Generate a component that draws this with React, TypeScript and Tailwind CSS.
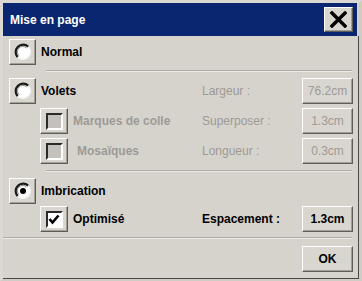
import React from 'react';

const raised =
	'border border-t-white border-l-white border-r-[#5e5c58] border-b-[#5e5c58] shadow-[inset_-1px_-1px_0_#a19e98]';

const RadioBtn = ({ checked }: { checked?: boolean }) => (
	<div className={`w-[27px] h-[26px] flex items-center justify-center bg-[#d9d6d0] ${raised}`}>
		<svg width="18" height="18" viewBox="0 0 18 18">
			<circle cx="9" cy="9" r="7.5" fill="#ffffff" />
			<path d="M3.7 14.3 A7.5 7.5 0 0 1 14.3 3.7" fill="none" stroke="#1a1a1a" strokeWidth="2.2" />
			<path d="M14.3 3.7 A7.5 7.5 0 0 1 3.7 14.3" fill="none" stroke="#f4f4f4" strokeWidth="1.5" />
			<path d="M5 12.5 A5.3 5.3 0 0 1 12.5 5" fill="none" stroke="#8a8884" strokeWidth="1" />
			{checked && <circle cx="9" cy="9" r="3" fill="#000000" />}
		</svg>
	</div>
);

const CheckBtn = ({ checked, disabled }: { checked?: boolean; disabled?: boolean }) => (
	<div className={`w-[28px] h-[26px] flex items-center justify-center bg-[#d9d6d0] ${raised}`}>
		<div
			className={`w-[17px] h-[17px] border-2 border-t-[#2a2a2a] border-l-[#2a2a2a] border-r-white border-b-white flex items-center justify-center ${
				disabled ? 'bg-[#c4c1bc]' : 'bg-white'
			}`}
		>
			{checked && (
				<svg width="12" height="11" viewBox="0 0 12 11">
					<path d="M1.5 5 L4.5 8.5 L10.5 1.5" fill="none" stroke="#000" strokeWidth="2.6" />
				</svg>
			)}
		</div>
	</div>
);

const ValueBox = ({ value, disabled }: { value: string; disabled?: boolean }) => (
	<div
		className={`w-[51px] h-[26px] flex items-center justify-center text-[12px] bg-[#d9d6d0] ${raised} ${
			disabled ? 'text-[#9d9a95]' : 'text-black font-bold'
		}`}
	>
		{value}
	</div>
);

const Sep = ({ full }: { full?: boolean }) => (
	<div className={`h-[2px] border-t border-t-[#aeaba6] border-b border-b-[#ecebe8] ${full ? 'ml-0' : 'ml-[37px]'} mr-[1px]`} />
);

const Row = ({
	left,
	label,
	box,
	mt,
	labelGray,
}: {
	left: React.ReactNode;
	label?: string;
	box?: React.ReactNode;
	mt: string;
	labelGray?: boolean;
}) => (
	<div className={`flex items-center h-[26px] ${mt}`}>
		<div className="flex-1 flex items-center">{left}</div>
		{label && (
			<div className={`w-[100px] text-[12px] ${labelGray ? 'text-[#9d9a95]' : 'text-black font-bold'}`}>{label}</div>
		)}
		{box}
	</div>
);

export default function App() {
	return (
		<div
			className="w-[362px] h-[281px] bg-[#d6d3cd] border-t-[3px] border-l-[3px] border-t-[#dcd9d4] border-l-[#dcd9d4] border-r-[3px] border-b-[2px] border-r-[#cfccc6] border-b-[#cfccc6] flex flex-col"
			style={{ fontFamily: '"Liberation Sans", Arial, sans-serif' }}
		>
			<div className="h-[33px] bg-[#0a2670] flex items-center justify-between pl-[7px] pr-[4px] mr-[2px] shrink-0">
				<span className="text-white font-bold text-[12px]">Mise en page</span>
				<div className={`w-[29px] h-[25px] bg-[#d9d6d0] flex items-center justify-center ${raised}`}>
					<svg width="17" height="17" viewBox="0 0 17 17">
						<path d="M2 2 L15 15 M15 2 L2 15" stroke="#000" strokeWidth="3.4" strokeLinecap="square" />
					</svg>
				</div>
			</div>
			<div className="flex-1 flex flex-col pl-[6px] pr-[5px] border-r border-r-[#4a4845] border-b border-b-[#4a4845]">
				<Row
					mt="mt-[3px]"
					left={
						<>
							<RadioBtn />
							<span className="ml-[5px] text-[12px] font-bold text-black">Normal</span>
						</>
					}
				/>
				<div className="mt-[5px]">
					<Sep />
				</div>
				<Row
					mt="mt-[6px]"
					left={
						<>
							<RadioBtn />
							<span className="ml-[5px] text-[12px] font-bold text-black">Volets</span>
						</>
					}
					label="Largeur :"
					labelGray
					box={<ValueBox value="76.2cm" disabled />}
				/>
				<Row
					mt="mt-[4px]"
					left={
						<div className="ml-[31px] flex items-center">
							<CheckBtn disabled />
							<span className="ml-[5px] text-[12px] font-bold text-[#9d9a95]">Marques de colle</span>
						</div>
					}
					label="Superposer :"
					labelGray
					box={<ValueBox value="1.3cm" disabled />}
				/>
				<Row
					mt="mt-[4px]"
					left={
						<div className="ml-[31px] flex items-center">
							<CheckBtn disabled />
							<span className="ml-[9px] text-[12px] font-bold text-[#9d9a95]">Mosaïques</span>
						</div>
					}
					label="Longueur :"
					labelGray
					box={<ValueBox value="0.3cm" disabled />}
				/>
				<div className="mt-[6px]">
					<Sep />
				</div>
				<Row
					mt="mt-[6px]"
					left={
						<>
							<RadioBtn checked />
							<span className="ml-[5px] text-[12px] font-bold text-black">Imbrication</span>
						</>
					}
				/>
				<Row
					mt="mt-[2px]"
					left={
						<div className="ml-[31px] flex items-center">
							<CheckBtn checked />
							<span className="ml-[5px] text-[12px] font-bold text-black">Optimisé</span>
						</div>
					}
					label="Espacement :"
					box={<ValueBox value="1.3cm" />}
				/>
				<div className="mt-[5px] -ml-[6px]">
					<Sep full />
				</div>
				<div className="flex justify-end mt-[7px]">
					<ValueBox value="OK" />
				</div>
			</div>
		</div>
	);
}
